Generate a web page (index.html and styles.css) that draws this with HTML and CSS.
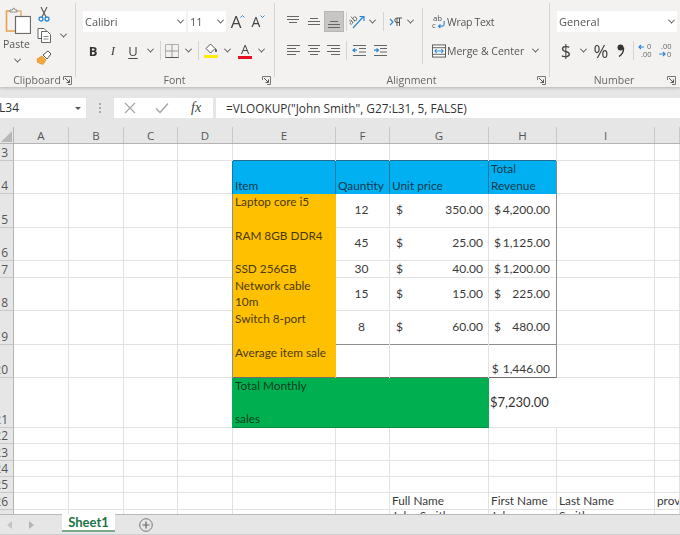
FILE: index.html
```html
<!DOCTYPE html>
<html lang="en">
<head>
<meta charset="utf-8">
<title>Sheet1 - Excel</title>
<link rel="stylesheet" href="styles.css">
</head>
<body>
<div class="app">
  <header class="ribbon">
    <section class="grp g-clip">
      <div class="clip-body">
        <div class="paste">
          <svg width="26" height="27" viewBox="0 0 26 27"><path d="M5 4H1.500V24H10" fill="none" stroke="#e8a04c" stroke-width="1.600"/><path d="M12 4h4v5" fill="none" stroke="#e8a04c" stroke-width="1.200"/><path d="M5 5V3h2.500l1-2h.5l1 2H12v2z" fill="#fff" stroke="#8a8a8a"/><rect x="10.500" y="9.500" width="15" height="17" fill="#fff" stroke="#6a6a6a" stroke-width="1.200"/></svg>
          <span class="paste-t">Paste</span>
          <i class="chev"></i>
        </div>
        <div class="clip-tools">
          <svg class="cl-sc" width="12" height="16" viewBox="0 0 12 16"><path d="M3 1l5 10M9 1L4 11" stroke="#555" stroke-width="1.100" fill="none"/><circle cx="3" cy="13" r="2" fill="none" stroke="#2b88d8" stroke-width="1.300"/><circle cx="9" cy="13" r="2" fill="none" stroke="#2b88d8" stroke-width="1.300"/></svg>
          <div class="cl-cp"><svg width="15" height="15" viewBox="0 0 15 15"><path d="M4 10.500H1V.5h6l2 2v1" fill="#fff" stroke="#666"/><path d="M4.500 3.500h6l3 3v8h-9z" fill="#fff" stroke="#666"/><path d="M6.500 8.500h5M6.500 11h5" stroke="#888"/></svg><i class="chev"></i></div>
          <svg class="cl-br" width="16" height="15" viewBox="0 0 16 15"><path d="M1 9l5-3 4 4-3 4.500-2-1-1 .5-1-1.500-1.500 0z" fill="#f3a83b" stroke="#e08a1e" stroke-width=".7"/><path d="M7 5l5-4 3 3-4 5z" fill="#fff" stroke="#555"/></svg>
        </div>
      </div>
      <footer class="lbl">Clipboard<svg class="launch" width="9" height="9" viewBox="0 0 9 9"><path d="M.5 4V.5H8.500V8.500H5" fill="none" stroke="#777"/><path d="M2 2l4.500 4.500M6.500 3.500v3h-3" fill="none" stroke="#555"/></svg></footer>
    </section>

    <section class="grp g-font">
      <div class="rows">
        <div class="row">
          <div class="box w103"><span>Calibri</span><i class="chev"></i></div>
          <div class="box w38 mg2"><span>11</span><i class="chev"></i></div>
          <div class="t w20 size-a big">A<svg class="caret" width="5" height="3" viewBox="0 0 5 3"><path d="M.5 2.500l2-2 2 2" fill="none" stroke="#2b88d8"/></svg></div>
          <div class="t w20 size-a small">A<svg class="caret" width="5" height="3" viewBox="0 0 5 3"><path d="M.5.500l2 2 2-2" fill="none" stroke="#2b88d8"/></svg></div>
        </div>
        <div class="row">
          <div class="t w20 fb">B</div>
          <div class="t w20 fi">I</div>
          <div class="t w20 fu">U</div>
          <div class="t w14"><i class="chev"></i></div>
          <div class="t w6"><i class="sep"></i></div>
          <div class="t w18"><svg width="14" height="14" viewBox="0 0 14 14"><path d="M.5.500h13v13H.500z" fill="none" stroke="#b0b0b0"/><path d="M7 .5v13M.5 7h13" stroke="#9a9a9a"/><path d="M.5 13.500h13" stroke="#555"/></svg></div>
          <div class="t w14"><i class="chev"></i></div>
          <div class="t w6"><i class="sep"></i></div>
          <div class="t w20 col-ic"><svg width="13" height="11" viewBox="0 0 13 11"><path d="M5.500 1L1 5.500 5.500 10 10 5.500z" fill="#fff" stroke="#555"/><path d="M10.500 5c1 1.500 1.500 2.500 1.500 3.200a1.100 1.100 0 0 1-2 0c0-.7 .5-1.700 .5-3.200z" fill="#333"/></svg><i class="bar yellow"></i></div>
          <div class="t w12"><i class="chev"></i></div>
          <div class="t w2"></div>
          <div class="t w20 col-ic"><span class="fa">A</span><i class="bar red"></i></div>
          <div class="t w12"><i class="chev"></i></div>
        </div>
      </div>
      <footer class="lbl">Font<svg class="launch" width="9" height="9" viewBox="0 0 9 9"><path d="M.5 4V.5H8.500V8.500H5" fill="none" stroke="#777"/><path d="M2 2l4.500 4.500M6.500 3.500v3h-3" fill="none" stroke="#555"/></svg></footer>
    </section>

    <section class="grp g-align">
      <div class="align-body">
        <div class="rows">
          <div class="row">
            <div class="t w21"><svg class="li" width="14" height="12" viewBox="0 0 14 12"><path d="M1 .5h12M1 3.500h12M3 6.500h8"/></svg></div>
            <div class="t w21"><svg class="li" width="14" height="12" viewBox="0 0 14 12"><path d="M3 2.500h8M1 5.500h12M1 8.500h12"/></svg></div>
            <div class="t w20 active"><svg class="li" width="14" height="12" viewBox="0 0 14 12"><path d="M3 5.500h8M1 8.500h12M1 11.500h12"/></svg></div>
            <div class="t w4"><i class="sep"></i></div>
            <div class="t w18"><svg width="16" height="15" viewBox="0 0 16 15"><text class="ab" x="0" y="9" transform="rotate(-40 4 8)">ab</text><path d="M4 14L14 3M10.500 2.500H15V7" fill="none" stroke="#2b88d8" stroke-width="1.200"/></svg></div>
            <div class="t w12"><i class="chev"></i></div>
            <div class="t w10"><i class="sep"></i></div>
            <div class="t w15"><svg width="14" height="10" viewBox="0 0 14 10"><path d="M1 2l3 3-3 3" fill="none" stroke="#2b88d8" stroke-width="1.200"/><path d="M8 9V1h5M10.500 1v8M8 1a2 2 0 0 0 0 4.500h2" fill="none" stroke="#555"/></svg></div>
            <div class="t w15"><i class="chev"></i></div>
          </div>
          <div class="row">
            <div class="t w21"><svg class="li" width="14" height="12" viewBox="0 0 14 12"><path d="M1 .5h13M1 3.500h9M1 6.500h13M1 9.500h9"/></svg></div>
            <div class="t w21"><svg class="li" width="14" height="12" viewBox="0 0 14 12"><path d="M1 .5h12M3 3.500h8M1 6.500h12M3 9.500h8"/></svg></div>
            <div class="t w20"><svg class="li" width="14" height="12" viewBox="0 0 14 12"><path d="M0 .5h13M4 3.500h9M0 6.500h13M4 9.500h9"/></svg></div>
            <div class="t w4"><i class="sep"></i></div>
            <div class="t w21"><svg width="14" height="12" viewBox="0 0 14 12"><path class="lp" d="M1 .5h13M7 3.500h7M7 7h7M1 10.500h13"/><path d="M5 5.200H1M3 3.500L1 5.200 3 7" fill="none" stroke="#2b88d8" stroke-width="1.200"/></svg></div>
            <div class="t w21"><svg width="14" height="12" viewBox="0 0 14 12"><path class="lp" d="M1 .5h13M7 3.500h7M7 7h7M1 10.500h13"/><path d="M1 5.200h4M3.500 3.500l2 1.700-2 1.800" fill="none" stroke="#2b88d8" stroke-width="1.200"/></svg></div>
          </div>
        </div>
        <i class="sep tall"></i>
        <div class="rows wrapcol">
          <div class="row"><svg width="14" height="17" viewBox="0 0 15 17"><text class="ab" x="1" y="8">ab</text><text class="ab" x="0" y="16">c</text><path d="M13 8v3.500a2 2 0 0 1-2 2H7M9 11.500l-2 2 2 2" fill="none" stroke="#2b88d8" stroke-width="1.200"/></svg><span class="rt tight">Wrap Text</span></div>
          <div class="row"><svg width="14" height="14" viewBox="0 0 15 14"><rect x=".5" y=".5" width="14" height="13" fill="#fff" stroke="#555"/><path d="M.5 3.500h14M.5 10.500h14" stroke="#555"/><path d="M3 7h9M5 5L3 7l2 2M10 5l2 2-2 2" fill="none" stroke="#2b88d8" stroke-width="1.100"/></svg><span class="rt">Merge &amp; Center</span><i class="chev mchev"></i></div>
        </div>
      </div>
      <footer class="lbl">Alignment<svg class="launch" width="9" height="9" viewBox="0 0 9 9"><path d="M.5 4V.5H8.500V8.500H5" fill="none" stroke="#777"/><path d="M2 2l4.500 4.500M6.500 3.500v3h-3" fill="none" stroke="#555"/></svg></footer>
    </section>

    <section class="grp g-num">
      <div class="rows">
        <div class="row"><div class="box w120"><span>General</span><i class="chev"></i></div></div>
        <div class="row">
          <div class="t w18 nsym">$</div>
          <div class="t w16"><i class="chev"></i></div>
          <div class="t w20 nsym">%</div>
          <div class="t w20"><svg width="8" height="13" viewBox="0 0 8 13"><circle cx="3.500" cy="3.500" r="3" fill="#333"/><path d="M6.500 3.500C6.800 7.500 5 10.500 2 12.500" fill="none" stroke="#333" stroke-width="1.400"/></svg></div>
          <div class="t w4"><i class="sep"></i></div>
          <div class="t w20"><svg width="15" height="15" viewBox="0 0 15 15"><path d="M6 4H1M3 2L1 4l2 2" fill="none" stroke="#2b88d8" stroke-width="1.200"/><text class="dec" x="9" y="6">0</text><text class="dec" x="3" y="14">.00</text></svg></div>
          <div class="t w20"><svg width="15" height="15" viewBox="0 0 15 15"><text class="dec" x="3" y="6">.00</text><path d="M1 11h6M5 9l2 2-2 2" fill="none" stroke="#2b88d8" stroke-width="1.200"/><text class="dec" x="9" y="14">0</text></svg></div>
        </div>
      </div>
      <footer class="lbl">Number<svg class="launch" width="9" height="9" viewBox="0 0 9 9"><path d="M.5 4V.5H8.500V8.500H5" fill="none" stroke="#777"/><path d="M2 2l4.500 4.500M6.500 3.500v3h-3" fill="none" stroke="#555"/></svg></footer>
    </section>
  </header>

  <div class="fbar">
    <div class="namebox"><span>L34</span><i class="tri"></i></div>
    <div class="dots"><i></i><i></i><i></i></div>
    <div class="fbtns">
      <svg width="12" height="12" viewBox="0 0 12 12"><path d="M1 1l10 10M11 1L1 11" stroke="#a6a6a6" stroke-width="1.200"/></svg>
      <svg width="14" height="12" viewBox="0 0 14 12"><path d="M1 6.500L5 10.500 13 1.500" fill="none" stroke="#a6a6a6" stroke-width="1.500"/></svg>
      <span class="fx">fx</span>
    </div>
    <div class="finput">=VLOOKUP("John Smith", G27:L31, 5, FALSE)</div>
  </div>

  <main class="sheet">
    <div class="r head"><div class="corner"><svg width="13" height="13" viewBox="0 0 13 13"><path d="M12 1v11H1z" fill="#b8b8b8"/></svg></div><div class="ch">A</div><div class="ch">B</div><div class="ch">C</div><div class="ch">D</div><div class="ch">E</div><div class="ch">F</div><div class="ch">G</div><div class="ch">H</div><div class="ch">I</div><div class="ch"></div></div>

    <div class="r h17"><div class="rh"><span>13</span></div><i class="c"></i><i class="c"></i><i class="c"></i><i class="c"></i><i class="c kb"></i><i class="c kb"></i><i class="c kb"></i><i class="c kb"></i><i class="c"></i><i class="c"></i></div>

    <div class="r h33"><div class="rh"><span>14</span></div><i class="c"></i><i class="c"></i><i class="c"></i><i class="c kr"></i>
      <div class="c blue kr btm">Item</div><div class="c blue kr btm">Qauntity</div><div class="c blue kr btm">Unit price</div><div class="c blue kr2 btm">Total<br>Revenue</div><i class="c"></i><i class="c"></i></div>

    <div class="r h34"><div class="rh"><span>15</span></div><i class="c"></i><i class="c"></i><i class="c"></i><i class="c gr"></i>
      <div class="c org">Laptop core i5</div><div class="c num">12</div><div class="c acc"><span>$</span><span>350.00</span></div><div class="c acc2 gr"><span>$</span><span>4,200.00</span></div><i class="c"></i><i class="c"></i></div>

    <div class="r h33"><div class="rh"><span>16</span></div><i class="c"></i><i class="c"></i><i class="c"></i><i class="c gr"></i>
      <div class="c org">RAM 8GB DDR4</div><div class="c num low">45</div><div class="c acc low"><span>$</span><span>25.00</span></div><div class="c acc2 gr low"><span>$</span><span>1,125.00</span></div><i class="c"></i><i class="c"></i></div>

    <div class="r h17"><div class="rh"><span>17</span></div><i class="c"></i><i class="c"></i><i class="c"></i><i class="c gr"></i>
      <div class="c org btm">SSD 256GB</div><div class="c num">30</div><div class="c acc"><span>$</span><span>40.00</span></div><div class="c acc2 gr"><span>$</span><span>1,200.00</span></div><i class="c"></i><i class="c"></i></div>

    <div class="r h33"><div class="rh"><span>18</span></div><i class="c"></i><i class="c"></i><i class="c"></i><i class="c gr"></i>
      <div class="c org">Network cable<br>10m</div><div class="c num">15</div><div class="c acc"><span>$</span><span>15.00</span></div><div class="c acc2 gr"><span>$</span><span>225.00</span></div><i class="c"></i><i class="c"></i></div>

    <div class="r h34"><div class="rh"><span>19</span></div><i class="c"></i><i class="c"></i><i class="c"></i><i class="c gr"></i>
      <div class="c org">Switch 8-port</div><div class="c num gb">8</div><div class="c acc gb"><span>$</span><span>60.00</span></div><div class="c acc2 gr gb"><span>$</span><span>480.00</span></div><i class="c"></i><i class="c"></i></div>

    <div class="r h33"><div class="rh"><span>20</span></div><i class="c"></i><i class="c"></i><i class="c"></i><i class="c gr"></i>
      <div class="c org gb2">Average item sale</div><i class="c gb2"></i><i class="c gb2"></i><div class="c gr gb2 btm amount">$ 1,446.00</div><i class="c"></i><i class="c"></i></div>

    <div class="r h50"><div class="rh"><span>21</span></div><i class="c"></i><i class="c"></i><i class="c"></i><i class="c gr2"></i>
      <div class="c green s3">Total Monthly<br><br>sales</div><div class="c total s2">$7,230.00</div><i class="c"></i></div>

    <div class="r h16"><div class="rh"><span>22</span></div><i class="c"></i><i class="c"></i><i class="c"></i><i class="c"></i><i class="c"></i><i class="c"></i><i class="c"></i><i class="c"></i><i class="c"></i><i class="c"></i></div>
    <div class="r h17"><div class="rh"><span>23</span></div><i class="c"></i><i class="c"></i><i class="c"></i><i class="c"></i><i class="c"></i><i class="c"></i><i class="c"></i><i class="c"></i><i class="c"></i><i class="c"></i></div>
    <div class="r h16"><div class="rh"><span>24</span></div><i class="c"></i><i class="c"></i><i class="c"></i><i class="c"></i><i class="c"></i><i class="c"></i><i class="c"></i><i class="c"></i><i class="c"></i><i class="c"></i></div>
    <div class="r h16"><div class="rh"><span>25</span></div><i class="c"></i><i class="c"></i><i class="c"></i><i class="c"></i><i class="c"></i><i class="c"></i><i class="c"></i><i class="c"></i><i class="c"></i><i class="c"></i></div>
    <div class="r h17"><div class="rh"><span>26</span></div><i class="c"></i><i class="c"></i><i class="c"></i><i class="c"></i><i class="c"></i><i class="c"></i><div class="c btm">Full Name</div><div class="c btm">First Name</div><div class="c btm">Last Name</div><div class="c btm">province</div></div>
    <div class="r h17"><div class="rh"><span>27</span></div><i class="c"></i><i class="c"></i><i class="c"></i><i class="c"></i><i class="c"></i><i class="c"></i><div class="c top27">John Smith</div><div class="c top27">John</div><div class="c top27">Smith</div><i class="c"></i></div>
  </main>

  <footer class="tabs">
    <svg class="arrow" width="6" height="8" viewBox="0 0 6 8"><path d="M5 0v8L0 4z" fill="#c4c4c4"/></svg>
    <svg class="arrow a2" width="6" height="8" viewBox="0 0 6 8"><path d="M1 0v8l5-4z" fill="#b4b4b4"/></svg>
    <div class="tab">Sheet1</div>
    <svg class="plus" width="14" height="14" viewBox="0 0 14 14"><circle cx="7" cy="7" r="6.300" fill="none" stroke="#777" stroke-width="1"/><path d="M7 3.500v7M3.500 7h7" stroke="#666" stroke-width="1.200"/></svg>
  </footer>
</div>
</body>
</html>
```

FILE: styles.css
```css
* { box-sizing: border-box; }
html, body { margin: 0; padding: 0; }
body { width: 680px; height: 535px; overflow: hidden; background: #fff; font-family: "Open Sans", "Noto Sans", sans-serif; color: #444; }
i { font-style: normal; display: block; }
.app { display: flex; flex-direction: column; height: 535px; filter: blur(.3px); }

/* ribbon */
.ribbon { display: flex; height: 87px; background: #f3f2f1; box-shadow: 0 1px 3px rgba(0,0,0,.22); position: relative; z-index: 2; flex: none; }
.grp { display: flex; flex-direction: column; position: relative; height: 87px; }
.grp::after { content: ""; position: absolute; right: 0; top: 3px; height: 74px; width: 1px; background: #d6d4d2; }
.g-clip { width: 76px; }
.g-font { width: 199px; padding: 11px 0 0 7px; }
.g-align { width: 275px; padding: 11px 0 0 7px; }
.g-num { width: 130px; padding: 11px 0 0 7px; }
.g-num::after { display: none; }
.lbl { position: absolute; left: 0; right: 0; bottom: 0; height: 17px; text-align: center; font-size: 10.5px; line-height: 20px; color: #666; padding-right: 2px; }
.launch { position: absolute; right: 4px; top: 6px; }
.rows { display: flex; flex-direction: column; gap: 8px; }
.row { display: flex; align-items: center; height: 21px; }
.t { display: flex; align-items: center; justify-content: center; height: 21px; flex: none; }
.w2 { width: 2px; } .w4 { width: 4px; } .w6 { width: 6px; } .w10 { width: 10px; } .w12 { width: 12px; } .w14 { width: 14px; } .w15 { width: 15px; } .w16 { width: 16px; } .w18 { width: 18px; } .w20 { width: 20px; } .w21 { width: 21px; }
.w38 { width: 38px; } .w103 { width: 103px; } .w120 { width: 120px; }
.mg2 { margin-left: 2px; }
.chev { width: 5px; height: 5px; border: solid #555; border-width: 0 1.3px 1.3px 0; transform: rotate(45deg) translate(-1px,-1px); flex: none; }
.sep { width: 1px; height: 19px; background: #d6d4d2; }
.sep.tall { height: 56px; margin: -3px 0 0 4px; flex: none; }
.box { display: flex; align-items: center; justify-content: space-between; height: 21px; background: #fff; padding: 0 3px 0 2px; font-size: 11px; color: #555; flex: none; }
.active { background: #c8c6c4; border: 1px solid #b8b6b4; }

/* clipboard */
.clip-body { display: flex; height: 70px; }
.paste { width: 32px; padding: 7px 0 0 5px; display: flex; flex-direction: column; align-items: flex-start; flex: none; }
.paste .chev { margin: 6px 0 0 10px; }
.paste-t { font-size: 10.5px; line-height: 15px; margin: 3px 0 0 -2px; color: #555; }
.clip-tools { display: flex; flex-direction: column; align-items: flex-start; padding: 6px 0 0 6px; }
.cl-cp { display: flex; align-items: center; gap: 9px; margin: 6px 0 0 -1px; }
.cl-br { margin: 7px 0 0 -2px; }

/* font */
.size-a { position: relative; color: #444; }
.big { font-size: 17px; }
.small { font-size: 14px; }
.caret { position: absolute; top: 4px; right: 1px; }
.fb { font-weight: 700; font-size: 13px; color: #333; }
.fi { font-style: italic; font-size: 13px; font-family: "Liberation Serif", serif; color: #444; }
.fu { font-size: 13px; text-decoration: underline; text-underline-offset: 2px; color: #444; }
.col-ic { flex-direction: column; gap: 1px; }
.fa { font-size: 13px; line-height: 12px; color: #444; }
.bar { width: 14px; height: 3px; }
.yellow { background: #ffec00; }
.red { background: #e81123; }

/* alignment */
.align-body { display: flex; }
.align-body .rows { flex: none; }
.li path, .lp { stroke: #666; stroke-width: 1; fill: none; }
.li { overflow: visible; }
.ab { font-size: 8.5px; fill: #555; font-family: "Open Sans", sans-serif; }
.wrapcol { margin-left: 9px; }
.wrapcol svg { flex: none; }
.rt { font-size: 10.5px; color: #555; margin-left: 1px; white-space: nowrap; }
.tight { letter-spacing: -.3px; }
.mchev { margin-left: 9px; }

/* number */
.nsym { font-size: 18px; color: #444; }
.dec { font-size: 7.5px; fill: #666; font-family: "Open Sans", sans-serif; }

/* formula bar */
.fbar { display: flex; align-items: center; height: 40px; background: #e6e6e6; padding-top: 1px; flex: none; }
.namebox { position: relative; width: 86px; height: 20px; background: #fff; font-size: 12px; line-height: 20px; overflow: hidden; color: #333; }
.namebox span { margin-left: -1px; }
.tri { position: absolute; left: 75px; top: 9px; border: 3px solid transparent; border-top-color: #555; }
.dots { width: 28px; display: flex; flex-direction: column; align-items: center; gap: 2px; }
.dots i { width: 2px; height: 2px; background: #aaa; }
.fbtns { display: flex; align-items: center; width: 99px; height: 20px; background: #fff; padding-left: 10px; gap: 19px; }
.fx { font-family: "Liberation Serif", serif; font-style: italic; font-size: 14px; color: #444; margin-left: 3px; }
.finput { flex: 1; height: 20px; background: #fff; margin-left: 3px; padding-left: 10px; font-size: 11.85px; line-height: 20px; color: #333; white-space: nowrap; }

/* sheet */
.sheet { flex: 1; min-height: 0; overflow: hidden; background: #fff; font-family: Lato, "Liberation Sans", sans-serif; font-size: 11.8px; color: #3a3a3a; }
.r { display: grid; grid-template-columns: 14px 55px 55px 54px 55px 103px 54px 99px 68px 98px 25px; }
.h16 { height: 16px; } .h17 { height: 17px; } .h33 { height: 33px; } .h34 { height: 34px; } .h50 { height: 50px; }
.head { height: 17px; background: #e6e6e6; border-bottom: 1px solid #b4b4b4; font-family: "Open Sans", sans-serif; font-size: 11.5px; color: #555; }
.corner { display: flex; align-items: flex-end; border-right: 1px solid #b4b4b4; }
.ch { display: flex; align-items: center; justify-content: center; border-right: 1px solid #c8c8c8; padding-top: 1px; }
.rh { display: flex; align-items: flex-end; justify-content: flex-end; overflow: hidden; background: #e6e6e6; border-right: 1px solid #b4b4b4; border-bottom: 1px solid #c8c8c8; padding-right: 5px; font-family: "Open Sans", sans-serif; font-size: 12px; line-height: 15px; color: #555; }
.c { display: block; min-width: 0; --lb: #e2e2e2; border-right: 1px solid #e2e2e2; box-shadow: inset 0 -1px 0 var(--lb); padding: 0 2px; line-height: 16px; white-space: nowrap; overflow: hidden; }
.btm { display: flex; flex-direction: column; justify-content: flex-end; line-height: 16.5px; }
.h17 .btm { line-height: 18px; }
.blue { background: #00b0f0; color: #0f3a4d; --lb: #00b0f0; }
.org { background: #ffc000; color: #4a3a05; border-right-color: #ffc000; --lb: #ffc000; }
.org:not(.btm) { line-height: 16px; }
.green { background: #00b050; color: #063d20; --lb: #018a3f; border-right-color: #00b050; line-height: 16.5px; }
.s3 { grid-column: span 3; }
.s2 { grid-column: span 2; }
.kb { --lb: #1c6f93; }
.kr { border-right-color: #1a7aa3; }
.kr2 { border-right-color: #7a8f98; }
.gr { border-right-color: #8e8e8e; }
.gr2 { border-right-color: #00b050; }
.gb { --lb: #8e8e8e; }
.gb2 { --lb: #6e6e6e; }
.num { display: flex; align-items: center; justify-content: center; padding: 0 2px 2px 0; font-size: 12px; }
.acc { display: flex; align-items: center; justify-content: space-between; padding: 0 5px 2px 6px; font-size: 12px; }
.acc2 { display: flex; align-items: center; justify-content: space-between; padding: 0 6px 2px 5px; font-size: 12px; }
.low { align-items: flex-end; padding-bottom: 10px; }
.amount { padding-right: 6px; padding-left: 0; align-items: flex-end; font-size: 12px; word-spacing: 1px; line-height: 18px; }
.total { display: flex; align-items: center; font-size: 13px; color: #333; padding: 0 0 2px 1px; }
.top27 { line-height: 12px; }

/* tabs */
.tabs { display: flex; align-items: flex-start; height: 21px; background: #e6e6e6; border-top: 1px solid #b8b8b8; border-bottom: 1px solid #cfcfcf; flex: none; position: relative; z-index: 1; }
.arrow { margin: 6px 0 0 7px; }
.a2 { margin-left: 15px; }
.tab { width: 53px; height: 18px; margin: -1px 0 0 28px; background: #fff; border-bottom: 2px solid #7fa98f; text-align: center; font-family: Lato, sans-serif; font-weight: 700; font-size: 13px; line-height: 17px; color: #217346; }
.plus { margin: 3px 0 0 24px; }
```
